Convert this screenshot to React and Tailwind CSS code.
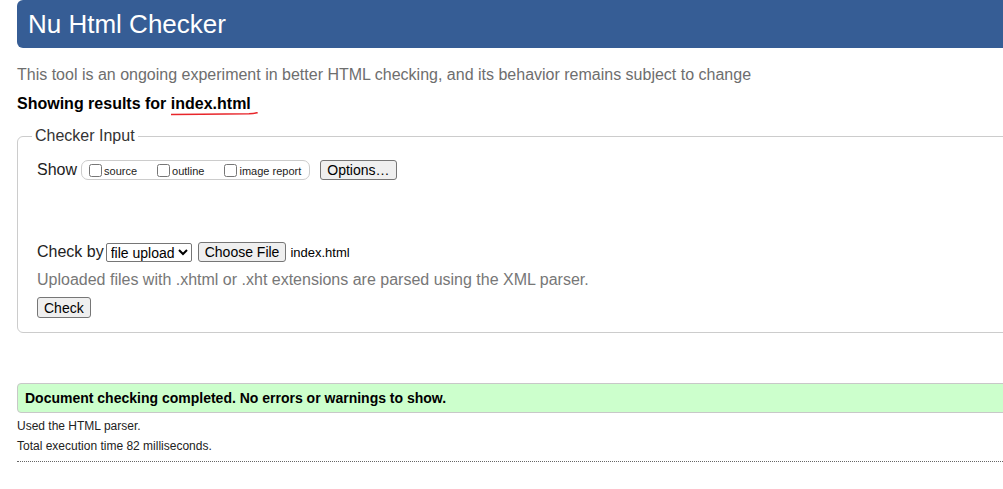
import React from 'react'

const btn =
  'border border-[#767676] bg-[#efefef] rounded-[3px] text-[14px] leading-[16px] text-black px-[6px] py-[1px] font-["Liberation_Sans",Arial,sans-serif]'

const Check = ({ label }) => (
  <label className="flex items-center">
    <input type="checkbox" className="m-0 ml-[7px] mr-[2px] w-[13px] h-[13px]" />
    <span className="text-[11px] leading-[13px] mt-[3px] text-[#222]">{label}</span>
  </label>
)

export default function App() {
  return (
    <div className="w-screen h-screen overflow-hidden bg-white font-['Liberation_Sans',Arial,sans-serif] text-[#222]">
      <div className="ml-[17px] w-[1120px]">
        {/* Header */}
        <div className="h-[48px] bg-[#365d95] rounded-[6px] flex items-center pl-[11px]">
          <h1 className="text-[26px] leading-[32px] text-white font-normal">Nu Html Checker</h1>
        </div>

        <p className="mt-[18px] text-[16px] leading-[18px] text-[#6e6e6e]">
          This tool is an ongoing experiment in better HTML checking, and its behavior remains subject to change
        </p>

        <p className="mt-[11px] text-[16px] leading-[18px] font-bold text-black">
          Showing results for{' '}
          <span className="relative">
            index.html
            <svg className="absolute left-0 top-[16px]" width="90" height="6" viewBox="0 0 90 6">
              <path d="M0 3.5 C 25 3.2, 60 3.2, 78 2.8 C 82 2.6, 84 2.4, 86 1.8" stroke="#e8262b" strokeWidth="1.6" fill="none" strokeLinecap="round" />
            </svg>
          </span>
        </p>

        {/* Checker Input */}
        <fieldset className="mt-[14px] border border-[#cccccc] rounded-[6px] pl-[14px] pr-[14px] pb-[12px]">
          <legend className="px-[3px] text-[16px] leading-[18px] text-[#333]">Checker Input</legend>
          <div className="pl-[5px]">
            <div className="flex items-center mt-[15px] h-[20px]">
              <span className="text-[16px] leading-[18px] mr-[4px]">Show</span>
              <div className="flex items-center h-[20px] border border-[#cccccc] rounded-[7px] pr-[8px]">
                <div><Check label="source" /></div>
                <div className="ml-[13px]"><Check label="outline" /></div>
                <div className="ml-[13px]"><Check label="image report" /></div>
              </div>
              <button className={`${btn} ml-[10px] h-[20px]`}>Options…</button>
            </div>

            <div className="flex items-center mt-[62px] h-[20px]">
              <span className="text-[16px] leading-[18px] mr-[2px]">Check by</span>
              <select className="border border-[#767676] rounded-[2px] bg-white text-[14px] leading-[16px] h-[19px] text-black">
                <option>file upload</option>
              </select>
              <button className={`${btn} ml-[6px] h-[20px]`}>Choose File</button>
              <span className="ml-[4px] text-[13px] leading-[15px] text-black">index.html</span>
            </div>

            <p className="mt-[9px] text-[16px] leading-[18px] text-[#777]">
              Uploaded files with .xhtml or .xht extensions are parsed using the XML parser.
            </p>

            <button className={`${btn} mt-[8px] h-[21px]`}>Check</button>
          </div>
        </fieldset>

        {/* Result */}
        <div className="mt-[50px] h-[30px] bg-[#ccffcc] border border-[#c8c8c8] rounded-[4px] flex items-center pl-[7px]">
          <span className="text-[14px] leading-[16px] font-bold text-black">
            Document checking completed. No errors or warnings to show.
          </span>
        </div>

        <p className="mt-[6px] text-[12px] leading-[14px] text-[#222]">Used the HTML parser.</p>
        <p className="mt-[6px] text-[12px] leading-[14px] text-[#222]">Total execution time 82 milliseconds.</p>
        <div className="mt-[8px] border-b border-dotted border-[#666]" />
      </div>
    </div>
  )
}
